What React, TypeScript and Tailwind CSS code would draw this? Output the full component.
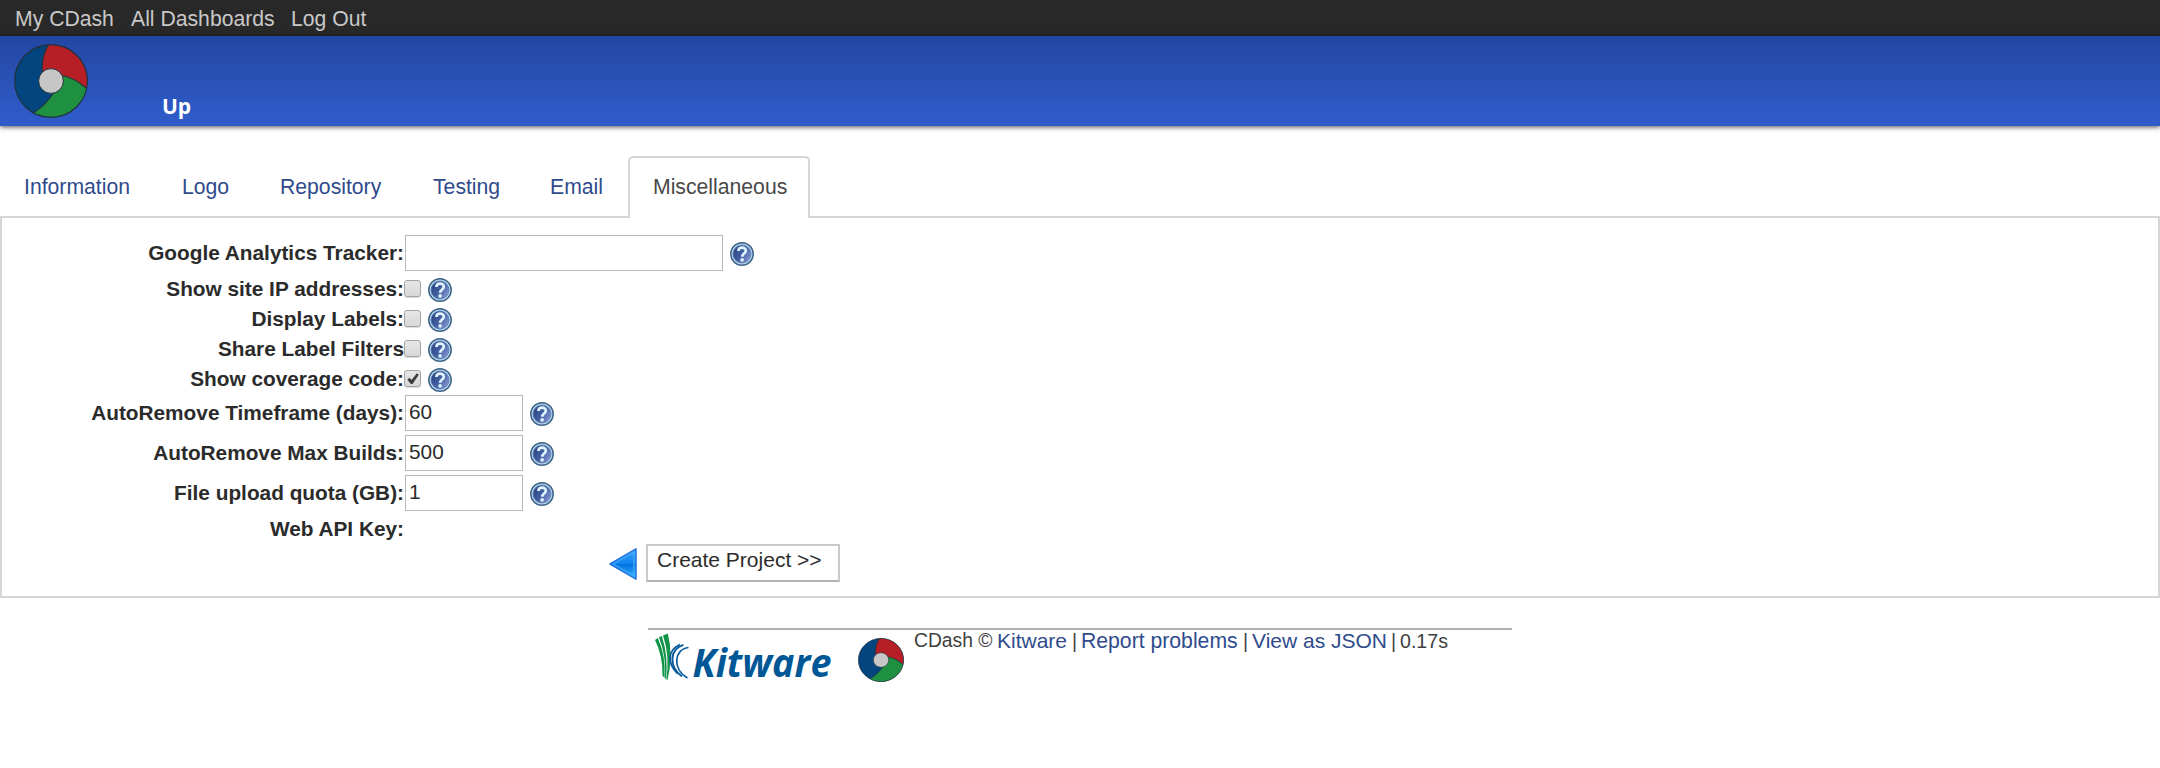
import React from "react";

function CDashLogo({ className }: { className: string }) {
  return (
    <svg viewBox="0 0 74 74" preserveAspectRatio="none" className={className}>
      <circle cx="37" cy="37" r="36.4" fill="#03457f" />
      <path d="M34.6 .8A36.4 36.4 0 0 1 72.6 44.6Q62 34.5 49 32L28 27Q27.5 11 34.6 .8Z" fill="#b71f26" />
      <path d="M72.6 44.6A36.4 36.4 0 0 1 19.3 68.8Q31 62 39.5 49L49 31.5Q62 34.5 72.6 44.6Z" fill="#1f8f40" />
      <path
        d="M34.6 .8Q27.5 11 28.2 28M49 31.7Q62 34.5 72.6 44.6M39.5 49Q31 62 19.3 68.8"
        fill="none"
        stroke="#22303a"
        strokeWidth="1.1"
      />
      <circle cx="37" cy="37" r="36.4" fill="none" stroke="#22303a" strokeWidth="1.1" />
      <circle cx="37" cy="37" r="12.4" fill="#c6c6c6" stroke="#22303a" strokeWidth="1" />
    </svg>
  );
}

function HelpIcon({ className = "" }: { className?: string }) {
  return (
    <svg viewBox="0 0 24 24" className={`size-6 shrink-0 ${className}`}>
      <defs>
        <linearGradient id="help" x1="0" y1="0.2" x2="1" y2="0.8">
          <stop offset="0" stopColor="#2a4180" />
          <stop offset="0.5" stopColor="#4460a2" />
          <stop offset="1" stopColor="#8a9bd6" />
        </linearGradient>
      </defs>
      <circle cx="12" cy="12" r="11.2" fill="#b9dcf3" stroke="#3f6287" strokeWidth="1.5" />
      <circle cx="12" cy="12" r="9" fill="url(#help)" stroke="#5c7fae" strokeWidth=".9" />
      <path d="M8.4 9C8.400 4.700 15.800 4.600 15.800 8.700C15.800 11.400 12.200 11.500 12.200 14.700" fill="none" stroke="#dff4ff" strokeWidth="2.700" />
      <circle cx="12.100" cy="17.900" r="1.800" fill="#dff4ff" />
    </svg>
  );
}

function Checkbox({ checked }: { checked?: boolean }) {
  return (
    <span className="mt-[5px] flex size-[17px] shrink-0 items-center justify-center rounded-[3px] border border-[#a3a3a3] bg-linear-to-b from-[#e6e6e6] to-[#d8d8d8] shadow-[0_1px_1px_rgba(0,0,0,0.15)]">
      {checked && (
        <svg viewBox="0 0 12 12" className="size-3">
          <path d="M.3 6.800L2.500 4.700L4.600 7L9.900 .3L11.800 1.800L5.500 11L3.900 11Z" fill="#3c3c3c" />
        </svg>
      )}
    </span>
  );
}

function Label({ children, className }: { children: string; className: string }) {
  return (
    <div className={`w-[402px] shrink-0 text-right text-[20.8px] leading-6 font-bold whitespace-nowrap text-[#2b2b2b] ${className}`}>
      {children}
    </div>
  );
}

function InputRow({ label, value, width }: { label: string; value: string; width: string }) {
  return (
    <div className="flex h-10 items-start">
      <Label className="mt-[6px]">{label}</Label>
      <div className={`ml-px h-9 border border-[#b8b8b8] pt-[4px] pl-[3px] text-[20.8px] leading-6 text-[#2b2b2b] ${width}`}>{value}</div>
      <HelpIcon className="mt-[7px] ml-[7px]" />
    </div>
  );
}

function CheckRow({ label, checked }: { label: string; checked?: boolean }) {
  return (
    <div className="flex h-[30px] items-start">
      <Label className="mt-[2px]">{label}</Label>
      <Checkbox checked={checked} />
      <HelpIcon className="mt-[3px] ml-[7px]" />
    </div>
  );
}

function KitwareLogo() {
  return (
    <svg viewBox="0 0 180 60" className="-mb-[10px] h-[60px] w-[180px] shrink-0">
      <g fill="#119447">
        <path d="M0 8L2.800 6Q11 24 9.500 45.500L7.500 44Q8 24 0 8Z" />
        <path d="M4 5.500L6.800 4Q13.500 24 11 47L9.800 46Q11.500 24 4 5.500Z" />
        <path d="M8 3.500L12.800 1.500Q18.500 24 12.500 48L11.300 47.500Q15 24 8 3.500Z" />
      </g>
      <g fill="none" stroke="#0b5c9c">
        <path d="M25 12.500C12 18 12.500 32 22.500 41.500" strokeWidth="1.800" />
        <path d="M28.500 12.800C14 17 14 35 27 44.500" strokeWidth="1.900" />
        <path d="M33.500 15.500C19 17 17 37 32.500 46" strokeWidth="1.700" />
      </g>
      <text
        x="37.5"
        y="45"
        textLength="139"
        lengthAdjust="spacingAndGlyphs"
        fill="#005796"
        className="font-['Open_Sans','Noto_Sans',sans-serif] text-[38.5px] font-bold italic"
      >
        Kitware
      </text>
    </svg>
  );
}

const tabs: { name: string; className: string }[] = [
  { name: "Information", className: "ml-[24px] w-[158px]" },
  { name: "Logo", className: "w-[98px]" },
  { name: "Repository", className: "w-[153px]" },
  { name: "Testing", className: "w-[117px]" },
  { name: "Email", className: "w-[78px]" },
];

export default function App() {
  return (
    <div className="h-[768px] w-[2160px] overflow-hidden bg-white font-['Liberation_Sans',Arial,sans-serif]">
      <nav className="flex h-9 items-start bg-[#282828] pt-[7px] pl-[15px] text-[21.2px] leading-6 text-[#c9c9c9]">
        <a className="w-[116px] whitespace-nowrap">My CDash</a>
        <a className="w-[160px] whitespace-nowrap">All Dashboards</a>
        <a className="whitespace-nowrap">Log Out</a>
      </nav>
      <header className="flex h-[90px] items-start bg-linear-to-b from-[#2347a2] to-[#305ccc] shadow-[0_1px_5px_rgba(0,0,0,0.7)]">
        <CDashLogo className="mt-2 ml-[14px] size-[74px]" />
        <a className="mt-[58px] ml-[74px] font-['Open_Sans',sans-serif] text-[21px] leading-6 font-bold text-white">Up</a>
      </header>

      <div className="relative mt-[30px] flex h-[62px] items-start text-[21.2px] leading-6 text-[#2f4b8c]">
        {tabs.map((t) => (
          <a key={t.name} className={`mt-[19px] whitespace-nowrap ${t.className}`}>
            {t.name}
          </a>
        ))}
        <div className="h-[62px] w-[182px] rounded-t-[5px] border-2 border-b-0 border-[#d6d6d6] bg-white pt-[17px] pl-[23px] text-[#484848]">
          Miscellaneous
        </div>
      </div>

      <main className="-mt-[2px] h-[382px] border-2 border-[#d6d6d6] pt-[17px]">
        <InputRow label="Google Analytics Tracker:" value="" width="w-[318px]" />
        <CheckRow label="Show site IP addresses:" />
        <CheckRow label="Display Labels:" />
        <CheckRow label="Share Label Filters" />
        <CheckRow label="Show coverage code:" checked />
        <InputRow label="AutoRemove Timeframe (days):" value="60" width="w-[118px]" />
        <InputRow label="AutoRemove Max Builds:" value="500" width="w-[118px]" />
        <InputRow label="File upload quota (GB):" value="1" width="w-[118px]" />
        <div className="flex h-[29px] items-start">
          <Label className="mt-[2px]">Web API Key:</Label>
        </div>
        <div className="flex items-start pl-[607px]">
          <svg viewBox="0 0 28 32" className="mt-1 h-8 w-7">
            <defs>
              <linearGradient id="arrow" x1="0" y1="0" x2="0" y2="1">
                <stop offset="0" stopColor="#3ea4f8" />
                <stop offset="0.5" stopColor="#0c83ee" />
                <stop offset="0.52" stopColor="#0370e2" />
                <stop offset="1" stopColor="#35bcff" />
              </linearGradient>
            </defs>
            <path d="M27 .8V31.200L1 16Z" fill="url(#arrow)" stroke="#2376e0" strokeWidth="1.500" strokeLinejoin="round" />
            <path d="M25 3.800V28.200L4.300 16Z" fill="none" stroke="#51b3ff" strokeWidth="1" />
          </svg>
          <button className="ml-[9px] h-[38px] w-[194px] border-2 border-[#cacaca] border-b-[#b2b2b2] bg-white pb-[6px] pl-[9px] text-left text-[21px] leading-6 whitespace-nowrap text-[#2b2b2b]">
            Create Project &gt;&gt;
          </button>
        </div>
      </main>

      <footer className="mt-[30px] ml-[648px] flex w-[864px] items-start border-t-2 border-[#b0b0b0]">
        <div className="mt-[2px] ml-[7px]">
          <KitwareLogo />
        </div>
        <CDashLogo className="mt-[8px] ml-[23px] h-[44px] w-[46px]" />
        <div className="-mt-px ml-[10px] flex text-[21.2px] leading-6 whitespace-nowrap text-[#2f4b8c]">
          <span className="w-[83px] text-[19.3px] text-[#404040]">CDash ©</span>
          <a className="w-[75px] text-[21px]">Kitware</a>
          <span className="w-[9px] text-[19.6px] text-[#404040]">|</span>
          <a className="w-[162px]">Report problems</a>
          <span className="w-[9px] text-[19.6px] text-[#404040]">|</span>
          <a className="w-[139px] text-[21px]">View as JSON</a>
          <span className="w-[9px] text-[19.6px] text-[#404040]">|</span>
          <span className="text-[19.6px] text-[#404040]">0.17s</span>
        </div>
      </footer>
    </div>
  );
}
